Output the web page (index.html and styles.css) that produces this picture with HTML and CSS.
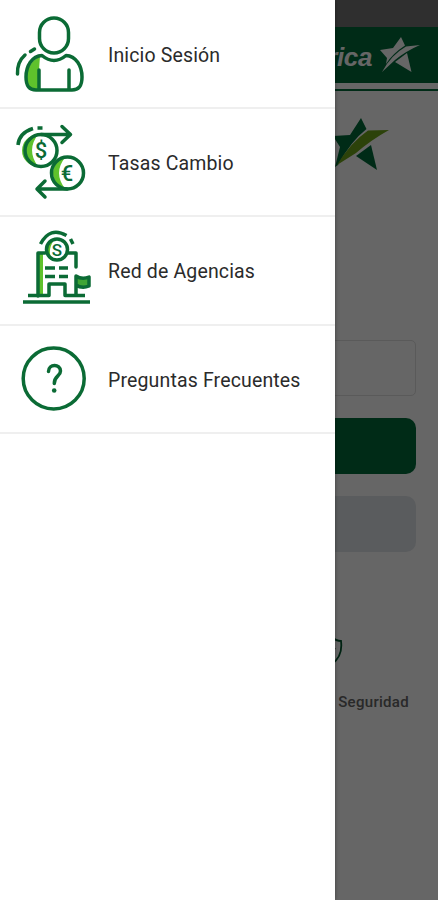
FILE: index.html
```
<!DOCTYPE html>
<html lang="es">
<head>
    <meta charset="UTF-8">
    <meta name="viewport" content="width=device-width, initial-scale=1.0">
    <title>Menú</title>
    <link rel="stylesheet" href="styles.css">
</head>
<body>
    <!-- Login screen under the menu -->
    <main class="screen">
        <div class="status-bar"></div>
        <header class="header">
            <span class="brand">rica</span>
            <svg class="brand-star" width="42" height="36" viewBox="0 0 42 36">
                <path d="M23 0 L27 8.500 Q14 17 8 27 L9 21 L2 13 L15 11 Z" fill="#fff"/>
                <path d="M4 35 Q13 18 28 9.500 L42 8 Q28 14 17 23 Z" fill="#fff"/>
                <path d="M17 25 L29 16 L33.500 35 Z" fill="#fff"/>
            </svg>
        </header>
        <div class="header-line"></div>

        <svg class="logo" width="66" height="56" viewBox="0 0 66 56">
            <path d="M38 1 L43.500 12 Q28 24 15 48 L12 50 L17 30 L10 19 L27 18 Z" fill="#006c3a"/>
            <path d="M14 48 Q27 26 45 13.500 L66 13 Q48 23 33 36 Z" fill="#6fa51a"/>
            <path d="M33 39 L48 28 L54 53 Z" fill="#006c3a"/>
        </svg>

        <div class="form">
            <div class="field"></div>
            <div class="button primary"></div>
            <div class="button secondary"></div>
        </div>

        <div class="shortcut">
            <svg class="shield" width="22" height="30" viewBox="0 0 22 30" fill="none" stroke="#00552d" stroke-width="1.800">
                <path d="M11 1 Q15 5 20 5 Q22 20 11 28 Q0 20 2 5 Q7 5 11 1 Z"/>
                <path d="M6 14 L10 18 L14 12"/>
            </svg>
            <span class="shortcut-label">Seguridad</span>
        </div>
    </main>

    <div class="scrim"></div>

    <nav class="drawer">
        <div class="item">
            <svg class="icon" width="108" height="106" viewBox="0 0 108 106">
                <path class="fill" d="M40 56 Q26 64 26 80 Q26 89 34 90 L39 90 V70 Z"/>
                <rect class="line" x="39.500" y="18" width="29" height="35" rx="14.500"/>
                <path class="line" d="M42 55.500 Q54 65.500 66 55.500 C76 56 82 66 82 77 C82 86 79 90 72 90 H36 C29 90 26 86 26 77 C26 66 32 56 42 55.500 Z"/>
                <path class="line" d="M39 89 V70 M69 89 V70"/>
                <path class="line" d="M17.500 74 Q17 62 25 55 M30.500 51.500 L34.500 49"/>
            </svg>
            <span class="label">Inicio Sesión</span>
        </div>
        <div class="item">
            <svg class="icon" width="108" height="106" viewBox="0 0 108 106">
                <path class="fill" d="M38 26.500 A16 16 0 0 0 38 58.500 Q26 42 38 26.500 Z"/>
                <path class="fill" d="M65 49.500 A16 16 0 0 0 65 80.500 Q53 65 65 49.500 Z"/>
                <circle class="line" cx="41" cy="42.500" r="16"/>
                <circle class="line" cx="67.500" cy="65" r="16"/>
                <path class="line" d="M41 26.500 H70 M62 18.500 L70.500 26.500 L62 34.500"/>
                <path class="line" d="M67 81 H38 M45 73 L37 81 L45 89"/>
                <path class="line butt" d="M18 37 Q19 25 33 20.500 M37.500 20 H42.500"/>
                <text class="coin" x="41" y="50">$</text>
                <text class="coin" x="67" y="73">€</text>
            </svg>
            <span class="label">Tasas Cambio</span>
        </div>
        <div class="item">
            <svg class="icon" width="108" height="106" viewBox="0 0 108 106">
                <path class="fill" d="M38 37 H43 V80 H38 Z"/>
                <path class="fill" d="M50 25 Q44 34 50 43 Q56 46 52 44 Q47 34 54 24 Z"/>
                <path class="line" d="M45 37 H38 V80 M68 37 H76 V51"/>
                <circle class="line" cx="57" cy="33.500" r="10.500"/>
                <path class="line butt" d="M40.500 28 Q50 10 66.500 19.500 M70.500 23 L73 28"/>
                <path class="line butt" d="M45 52 H55 M59 52 H68 M45 60.500 H55 M59 60.500 H68"/>
                <path class="line butt" d="M28 79.500 H49 V68 H65 V79.500 H85 M23 86 H90"/>
                <path class="line flag" d="M76 79 V60 Q82 64 89 61 V70 Q82 73 76 69"/>
                <text class="coin small" x="57" y="39.500">S</text>
            </svg>
            <span class="label">Red de Agencias</span>
        </div>
        <div class="item">
            <svg class="icon" width="108" height="106" viewBox="0 0 108 106">
                <circle class="line" cx="53.700" cy="53.500" r="30.500"/>
                <path class="line" d="M48.500 46.500 C48.500 38.500 60.500 38.500 60.500 46 C60.500 51.500 54.300 50.500 54.300 58.500"/>
                <circle class="dot" cx="54.200" cy="65.500" r="2.300"/>
            </svg>
            <span class="label">Preguntas Frecuentes</span>
        </div>
    </nav>
</body>
</html>
```
FILE: styles.css
```
body {
    margin: 0;
    height: 900px;
    position: relative;
    overflow: hidden;
    font-family: Roboto, Arial, sans-serif;
    background-color: #fff;
}
.screen {
    display: flex;
    flex-direction: column;
    align-items: stretch;
}
.status-bar {
    height: 27px;
    background-color: #757575;
}
.header {
    display: flex;
    justify-content: flex-end;
    align-items: center;
    height: 56px;
    padding-right: 18px;
    background-color: #006c3a;
}
.brand {
    margin: 4px 6px 0 0;
    font-family: "Liberation Sans", Arial, sans-serif;
    font-size: 26px;
    font-weight: bold;
    font-style: italic;
    line-height: 30px;
    letter-spacing: -0.4px;
    color: #fff;
}
.header-line {
    height: 2px;
    margin-top: 6px;
    background-color: #006c3a;
}
.logo {
    align-self: flex-end;
    margin: 26px 49px 0 0;
}
.form {
    display: flex;
    flex-direction: column;
    gap: 22px;
    margin: 167px 22px 0;
}
.field {
    box-sizing: border-box;
    height: 56px;
    border: 1px solid #e0e0e0;
    border-radius: 5px;
}
.button {
    height: 56px;
    border-radius: 10px;
}
.primary {
    background-color: #006c3a;
}
.secondary {
    background-color: #e2e6ea;
}
.shortcut {
    display: flex;
    flex-direction: column;
    align-items: flex-end;
    margin-top: 84px;
    padding-right: 29px;
}
.shield {
    margin-right: 66px;
}
.shortcut-label {
    margin-top: 26px;
    font-size: 15px;
    font-weight: 500;
    line-height: 20px;
    letter-spacing: 0.3px;
    color: #666;
}
.scrim {
    position: absolute;
    inset: 0;
    background-color: rgba(0, 0, 0, 0.6);
}
.drawer {
    position: absolute;
    top: 0;
    left: 0;
    bottom: 0;
    box-sizing: border-box;
    width: 334.5px;
    padding-top: 1px;
    background-color: #fff;
    box-shadow: 0 0 4px rgba(0, 0, 0, 0.4);
}
.item {
    display: flex;
    align-items: flex-start;
    box-sizing: border-box;
    height: 108.2px;
    border-bottom: 2px solid #efefef;
}
.icon {
    flex: none;
    margin-top: -1px;
}
.label {
    padding-top: 43px;
    font-size: 19.5px;
    line-height: 24px;
    letter-spacing: 0.15px;
    color: #2b2b2b;
    white-space: nowrap;
}
.line {
    fill: none;
    stroke: #0b6b35;
    stroke-width: 3.5;
    stroke-linecap: round;
    stroke-linejoin: round;
}
.butt {
    stroke-linecap: butt;
}
.fill {
    fill: #5fc22c;
}
.flag {
    fill: #3fa535;
}
.dot {
    fill: #0b6b35;
}
.coin {
    font-family: Roboto, Arial, sans-serif;
    font-size: 22px;
    font-weight: 500;
    text-anchor: middle;
    fill: #0b6b35;
}
.small {
    font-size: 17px;
}
```
